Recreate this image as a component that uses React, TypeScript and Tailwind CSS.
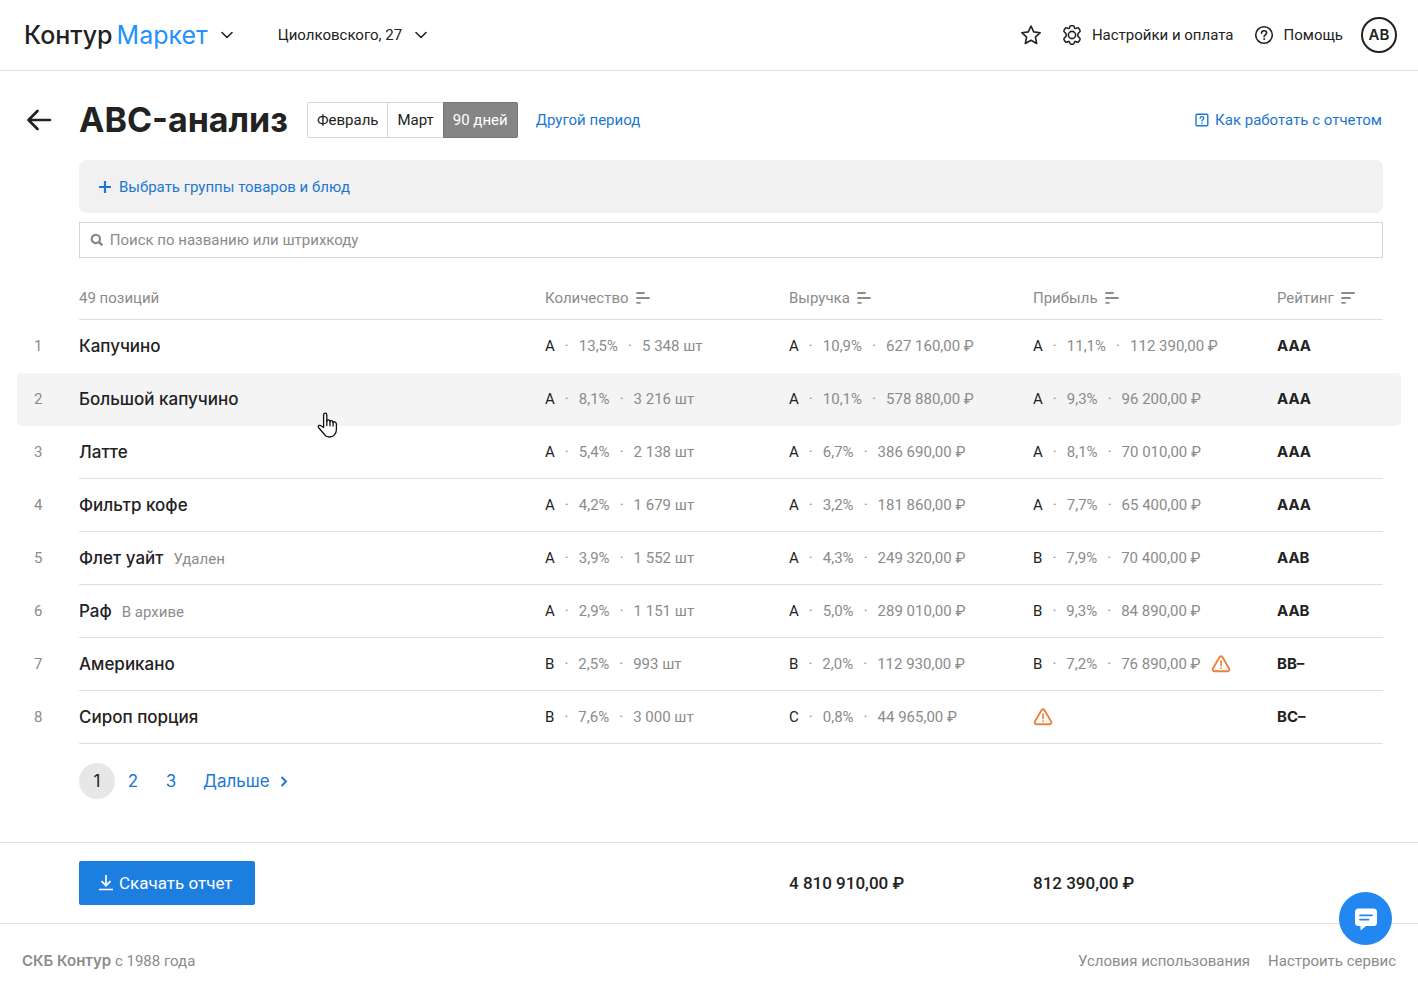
import type { ReactNode } from "react";

type Metric = {
  grade: string;
  share: string;
  value: string;
};

type Product = {
  name: string;
  note?: string;
  quantity: Metric;
  revenue: Metric;
  profit?: Metric;
  warning?: boolean;
  hovered?: boolean;
  rating: string;
};

const m = (grade: string, share: string, value: string): Metric => ({ grade, share, value });

const products: Product[] = [
  {
    name: "Капучино",
    quantity: m("A", "13,5%", "5 348 шт"),
    revenue: m("A", "10,9%", "627 160,00 ₽"),
    profit: m("A", "11,1%", "112 390,00 ₽"),
    rating: "AAA",
  },
  {
    name: "Большой капучино",
    quantity: m("A", "8,1%", "3 216 шт"),
    revenue: m("A", "10,1%", "578 880,00 ₽"),
    profit: m("A", "9,3%", "96 200,00 ₽"),
    rating: "AAA",
    hovered: true,
  },
  {
    name: "Латте",
    quantity: m("A", "5,4%", "2 138 шт"),
    revenue: m("A", "6,7%", "386 690,00 ₽"),
    profit: m("A", "8,1%", "70 010,00 ₽"),
    rating: "AAA",
  },
  {
    name: "Фильтр кофе",
    quantity: m("A", "4,2%", "1 679 шт"),
    revenue: m("A", "3,2%", "181 860,00 ₽"),
    profit: m("A", "7,7%", "65 400,00 ₽"),
    rating: "AAA",
  },
  {
    name: "Флет уайт",
    note: "Удален",
    quantity: m("A", "3,9%", "1 552 шт"),
    revenue: m("A", "4,3%", "249 320,00 ₽"),
    profit: m("B", "7,9%", "70 400,00 ₽"),
    rating: "AAB",
  },
  {
    name: "Раф",
    note: "В архиве",
    quantity: m("A", "2,9%", "1 151 шт"),
    revenue: m("A", "5,0%", "289 010,00 ₽"),
    profit: m("B", "9,3%", "84 890,00 ₽"),
    rating: "AAB",
  },
  {
    name: "Американо",
    quantity: m("B", "2,5%", "993 шт"),
    revenue: m("B", "2,0%", "112 930,00 ₽"),
    profit: m("B", "7,2%", "76 890,00 ₽"),
    warning: true,
    rating: "BB–",
  },
  {
    name: "Сироп порция",
    quantity: m("B", "7,6%", "3 000 шт"),
    revenue: m("C", "0,8%", "44 965,00 ₽"),
    warning: true,
    rating: "BC–",
  },
];

function ChevronDown() {
  return (
    <svg width="14" height="10" viewBox="0 0 14 10" fill="none" stroke="#222" strokeWidth="1.6" aria-hidden>
      <path d="M2 2.500l5 5 5-5" strokeLinecap="round" strokeLinejoin="round" />
    </svg>
  );
}

function StarIcon() {
  return (
    <svg width="22" height="22" viewBox="0 0 22 22" fill="none" stroke="#222" strokeWidth="1.6" strokeLinejoin="round" aria-hidden>
      <path d="M11 2l2.700 5.900 6.500.8-4.800 4.400 1.300 6.400L11 16.300l-5.700 3.200 1.300-6.400L1.800 8.700l6.500-.8z" />
    </svg>
  );
}

function GearIcon() {
  return (
    <svg width="20" height="22" viewBox="0 0 20 22" fill="none" stroke="#222" strokeWidth="1.600" strokeLinejoin="round" aria-hidden>
      <path d="M7.600 3.500Q7.800 1.800 9 1.800h2q1.200 0 1.400 1.700.2 1.400 1.900.7 1.900-.9 2.500.1l1.200 2q.6 1-.8 2.100-1.500 1.100-1.500 2.600t1.500 2.600q1.400 1.100.8 2.100l-1.200 2q-.6 1-2.500.1-1.700-.7-1.900.7-.2 1.700-1.400 1.700H9q-1.200 0-1.400-1.700-.2-1.400-1.900-.7-1.900.9-2.500-.1l-1.200-2q-.6-1 .8-2.100 1.500-1.100 1.500-2.600T2.800 8.400Q1.400 7.300 2 6.300l1.200-2q.6-1 2.500-.1 1.700.7 1.900-.7z" />
      <circle cx="10" cy="11" r="3.600" />
    </svg>
  );
}

function HelpIcon() {
  return (
    <svg width="20" height="20" viewBox="0 0 20 20" fill="none" stroke="#222" strokeWidth="1.600" strokeLinecap="round" aria-hidden>
      <circle cx="10" cy="10" r="8.300" />
      <path d="M7.500 8.100c.1-1.500 1.100-2.400 2.600-2.400 1.400 0 2.500.9 2.500 2.200 0 1.900-2.500 1.900-2.500 3.700" />
      <circle cx="10.100" cy="14" r=".5" fill="#222" strokeWidth="1" />
    </svg>
  );
}

function ManualIcon() {
  return (
    <svg width="14" height="14" viewBox="0 0 14 14" fill="none" stroke="currentColor" strokeWidth="1.400" strokeLinecap="round" aria-hidden>
      <rect x="1" y="1.300" width="11.800" height="11.500" rx="1" />
      <path d="M5.100 5.300c.1-1 .8-1.600 1.900-1.600 1 0 1.800.6 1.800 1.500C8.800 6.600 7 6.600 7 8" strokeWidth="1.300" />
      <path d="M7 10.300v.1" strokeWidth="1.500" />
    </svg>
  );
}

function BackIcon() {
  return (
    <svg width="26" height="24" viewBox="0 0 26 24" fill="none" stroke="#222" strokeWidth="2.700" strokeLinecap="round" strokeLinejoin="round" aria-hidden>
      <path d="M11.500 3L2.500 12l9 9M3 12h21" />
    </svg>
  );
}

function SearchIcon() {
  return (
    <svg width="14" height="14" viewBox="0 0 14 14" fill="none" stroke="#858585" strokeWidth="2.200" aria-hidden>
      <circle cx="5.900" cy="5.900" r="4.200" />
      <path d="M9 9l3.500 3.500" strokeWidth="2.600" />
    </svg>
  );
}

function SortIcon({ active }: { active?: boolean }) {
  return (
    <svg width="14" height="12" viewBox="0 0 14 12" fill="none" stroke="#8b8b8b" strokeWidth="1.800" strokeLinecap="round" aria-hidden>
      {active ? <path d="M1 1h12M1 6h8M1 10.800h3" /> : <path d="M1 1h7M1 6h12M1 10.800h3" />}
    </svg>
  );
}

function WarningIcon() {
  return (
    <svg width="20" height="18" viewBox="0 0 20 18" fill="none" stroke="#f0803c" strokeWidth="1.900" strokeLinecap="round" strokeLinejoin="round" role="img" aria-label="Внимание">
      <path d="M8.600 2.100q1.400-1.700 2.800 0l6.700 11.300q.8 2.600-1.400 2.800H3.300q-2.200-.2-1.400-2.800z" />
      <path d="M10 6v4.500M10 13.100v.1" strokeWidth="1.700" />
    </svg>
  );
}

function HandCursor() {
  return (
    <svg className="absolute left-[238px] top-[39px] z-10" width="22" height="27" viewBox="0 0 22 27" fill="#fff" stroke="#111" strokeWidth="1.300" strokeLinecap="round" strokeLinejoin="round" aria-hidden>
      <path d="M6.600 15.500V3Q6.700 1.200 8.200 1.200T9.800 3v6.300Q10 7.700 11.500 7.900t1.500 1.900q.2-1.300 1.600-1.100t1.500 1.900q.2-1.100 1.500-.8t1.800 2.100v5.600q0 3.200-2 5.400-1.800 2.100-5.100 2.100-3.500 0-5.200-3L1.500 15.500q-.8-1.600.6-2.100 1.200-.4 2.300.6z" />
      <path d="M9.800 9v4.500M13 9.800v4M16.100 10.600v3.500" fill="none" />
    </svg>
  );
}

function MetricText({ metric }: { metric: Metric }) {
  return (
    <span className="flex items-center gap-2.5 text-[#8b8b8b]">
      <span className="text-[#222]">{metric.grade}</span>
      <span className="w-1 text-center">·</span>
      <span>{metric.share}</span>
      <span className="w-1 text-center">·</span>
      <span>{metric.value}</span>
    </span>
  );
}

function SortHeader({ children, active }: { children: ReactNode; active?: boolean }) {
  return (
    <th scope="col" className="border-b border-[#dedede] p-0 text-left font-normal">
      <button type="button" className="flex items-center gap-[7px]">
        {children}
        <SortIcon active={active} />
      </button>
    </th>
  );
}

function ProductRow({ product, index, lineHidden }: { product: Product; index: number; lineHidden: boolean }) {
  const line = lineHidden ? "border-b border-transparent" : "border-b border-[#dedede]";
  return (
    <tr className={product.hovered ? "h-[53px] bg-[#f4f4f4]" : "h-[53px]"}>
      <td className="rounded-l-[5px] border-b border-transparent p-0 pl-[17px] text-[#8b8b8b]">{index}</td>
      <td className={`relative p-0 ${line}`}>
        <span className="flex items-baseline gap-2.5">
          <a href="#product" className="font-['Inter',sans-serif] text-[17px] font-medium">{product.name}</a>
          {product.note && <span className="text-[#8b8b8b]">{product.note}</span>}
        </span>
        {product.hovered && <HandCursor />}
      </td>
      <td className={`p-0 ${line}`}>
        <MetricText metric={product.quantity} />
      </td>
      <td className={`p-0 ${line}`}>
        <MetricText metric={product.revenue} />
      </td>
      <td className={`p-0 ${line}`}>
        <span className="flex items-center gap-2.5">
          {product.profit && <MetricText metric={product.profit} />}
          {product.warning && <WarningIcon />}
        </span>
      </td>
      <td className={`p-0 font-['Inter',sans-serif] font-bold ${line}`}>{product.rating}</td>
      <td className="rounded-r-[5px] p-0" />
    </tr>
  );
}

export default function App() {
  return (
    <div className="relative min-h-screen bg-white font-['Roboto','Liberation_Sans',sans-serif] text-[15px] leading-5 text-[#222]">
      <header className="flex h-[71px] items-center border-b border-[#dedede] pl-6 pr-[21px]">
        <button type="button" className="flex items-center gap-3">
          <span className="flex gap-1 font-['Inter',sans-serif] text-[25px] leading-8">
            <span className="font-medium">Контур</span>
            <span className="text-[#2291ff]">Маркет</span>
          </span>
          <ChevronDown />
        </button>
        <button type="button" className="ml-11 flex items-center gap-3">
          Циолковского, 27
          <ChevronDown />
        </button>
        <div className="ml-auto flex items-center gap-5">
          <button type="button" aria-label="Избранное">
            <StarIcon />
          </button>
          <a href="#settings" className="flex items-center gap-2.5">
            <GearIcon />
            Настройки и оплата
          </a>
          <span className="flex items-center gap-[18px]">
            <a href="#help" className="flex items-center gap-2.5">
              <HelpIcon />
              Помощь
            </a>
            <button type="button" className="size-9 rounded-full border-2 border-[#222] font-['Inter',sans-serif] font-semibold">
              AB
            </button>
          </span>
        </div>
      </header>

      <main>
        <div className="flex items-center pl-[26px] pr-9 pt-[26px]">
          <a href="#back" aria-label="Назад">
            <BackIcon />
          </a>
          <h1 className="ml-[27px] font-['Inter',sans-serif] text-[34px] font-bold leading-[46px]">ABC-анализ</h1>
          <div className="ml-[19px] flex h-9">
            <button type="button" className="rounded-l-xs border border-[#d5d5d5] px-[9px]">Февраль</button>
            <button type="button" className="border-y border-[#d5d5d5] px-[9px]">Март</button>
            <button type="button" className="rounded-r-xs border border-[#757575] bg-[#858585] px-[9px] text-white">90 дней</button>
          </div>
          <a href="#period" className="ml-[18px] text-[#1c77d2]">Другой период</a>
          <a href="#manual" className="ml-auto flex items-center gap-1.5 text-[#1c77d2]">
            <ManualIcon />
            Как работать с отчетом
          </a>
        </div>

        <div className="ml-[79px] mr-[35px] mt-[17px] flex h-[53px] items-center rounded-lg bg-[#f1f1f1] px-5">
          <button type="button" className="flex items-center gap-2 text-[#1c77d2]">
            <svg width="12" height="12" viewBox="0 0 12 12" stroke="currentColor" strokeWidth="2.200" aria-hidden>
              <path d="M6 0v12M0 6h12" />
            </svg>
            Выбрать группы товаров и блюд
          </button>
        </div>

        <label className="ml-[79px] mr-[35px] mt-[9px] flex h-9 items-center gap-1.5 border border-[#d5d5d5] px-2.5">
          <SearchIcon />
          <input
            type="text"
            aria-label="Поиск"
            placeholder="Поиск по названию или штрихкоду"
            className="w-full outline-none placeholder:text-[#8b8b8b]"
          />
        </label>

        <div className="mt-[19px] px-[17px]">
          <table className="w-full table-fixed border-separate border-spacing-0">
            <colgroup>
              <col className="w-[62px]" />
              <col />
              <col className="w-[244px]" />
              <col className="w-[244px]" />
              <col className="w-[244px]" />
              <col className="w-[106px]" />
              <col className="w-[18px]" />
            </colgroup>
            <thead>
              <tr className="h-[43px] text-[#8b8b8b]">
                <td />
                <th scope="col" className="border-b border-[#dedede] p-0 text-left font-normal">49 позиций</th>
                <SortHeader>Количество</SortHeader>
                <SortHeader>Выручка</SortHeader>
                <SortHeader>Прибыль</SortHeader>
                <SortHeader active>Рейтинг</SortHeader>
                <td />
              </tr>
            </thead>
            <tbody>
              {products.map((product, i) => (
                <ProductRow
                  key={product.name}
                  product={product}
                  index={i + 1}
                  lineHidden={Boolean(product.hovered || products[i + 1]?.hovered)}
                />
              ))}
            </tbody>
          </table>
        </div>

        <nav className="ml-[79px] mt-[19px] flex items-center font-['Inter',sans-serif] text-[17px] text-[#1c77d2]">
          <a href="#1" className="flex size-9 items-center justify-center rounded-full bg-[#e7e7e7] text-[#222]">1</a>
          <a href="#2" className="flex size-9 items-center justify-center">2</a>
          <a href="#3" className="flex h-9 w-10 items-center justify-center">3</a>
          <a href="#next" className="ml-3 flex items-center gap-2.5">
            Дальше
            <svg width="8" height="11" viewBox="0 0 8 11" fill="none" stroke="currentColor" strokeWidth="2" aria-hidden>
              <path d="M1.500 1l4.500 4.500L1.500 10" />
            </svg>
          </a>
        </nav>
      </main>

      <section className="mt-[43px] flex h-[82px] items-center border-y border-[#dedede] pl-[79px] pr-[141px] text-[17px] font-medium">
        <button type="button" className="flex h-11 items-center gap-1.5 rounded-xs bg-[#1c7fe0] pl-5 pr-[22px] font-normal text-white">
          <svg width="14" height="16" viewBox="0 0 14 16" fill="none" stroke="currentColor" strokeWidth="1.700" aria-hidden>
            <path d="M7 0v10.500M2.500 6.200L7 10.700l4.500-4.500M0 14.500h14" />
          </svg>
          Скачать отчет
        </button>
        <span className="ml-auto w-[244px]">4 810 910,00 ₽</span>
        <span className="w-[244px]">812 390,00 ₽</span>
      </section>

      <footer className="flex h-[74px] items-center justify-between px-[22px] text-[#8b8b8b]">
        <span>
          <b className="font-['Inter',sans-serif] font-semibold">СКБ Контур</b> с 1988 года
        </span>
        <span className="flex gap-[18px]">
          <a href="#terms">Условия использования</a>
          <a href="#service">Настроить сервис</a>
        </span>
      </footer>

      <button
        type="button"
        aria-label="Чат"
        className="fixed bottom-[53px] right-[26px] flex size-[53px] items-center justify-center rounded-full bg-[#2287f0]"
      >
        <svg width="24" height="24" viewBox="0 0 24 24" aria-hidden>
          <path d="M4.500 1.500h15q3.500 0 3.500 3.500v10.500q0 3.500-3.500 3.500H12l-5.500 4.500V19h-2Q1 19 1 15.500V5q0-3.500 3.500-3.500z" fill="#fff" />
          <path d="M6 8.300h12M6 12.600h8.500" stroke="#2287f0" strokeWidth="1.800" strokeLinecap="round" />
        </svg>
      </button>
    </div>
  );
}
